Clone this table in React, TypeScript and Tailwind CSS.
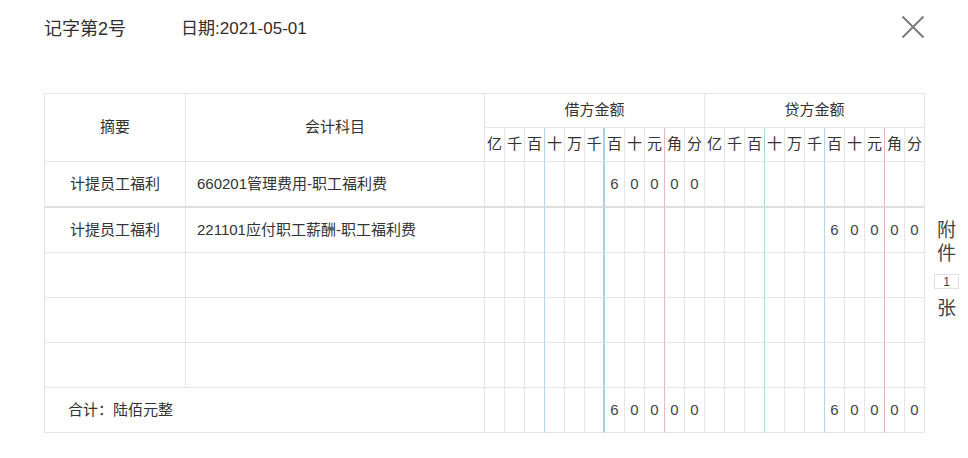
import React from "react";

const UNITS = ["亿", "千", "百", "十", "万", "千", "百", "十", "元", "角", "分"];
const EMPTY = ["", "", "", "", "", "", "", "", "", "", ""];
const SIX_HUNDRED = ["", "", "", "", "", "", "6", "0", "0", "0", "0"];

const ROWS = [
  { summary: "计提员工福利", subject: "660201管理费用-职工福利费", debit: SIX_HUNDRED, credit: EMPTY },
  { summary: "计提员工福利", subject: "221101应付职工薪酬-职工福利费", debit: EMPTY, credit: SIX_HUNDRED },
  { summary: "", subject: "", debit: EMPTY, credit: EMPTY },
  { summary: "", subject: "", debit: EMPTY, credit: EMPTY },
  { summary: "", subject: "", debit: EMPTY, credit: EMPTY },
];

const FONT = "[font-family:'Liberation_Sans','Noto_Sans_CJK_SC',sans-serif]";

// right border of each money column: blue after 百 / 千, red after 元
function lineClass(i: number, debit: boolean) {
  if (i === 2) return "border-r-[#aed8e4]";
  if (i === 5) return debit ? "border-r-2 border-r-[#a6d4e0]" : "border-r-[#aed8e4]";
  if (i === 8) return "border-r-[#e6b9bd]";
  return "border-r-[#e6e6e6]";
}

function MoneyCells({ digits, debit, rowBorder }: { digits: string[]; debit: boolean; rowBorder: string }) {
  return (
    <>
      {digits.map((d, i) => (
        <td key={i} className={`border-r border-b border-[#e6e6e6] ${rowBorder} ${lineClass(i, debit)} p-0 text-center text-[15px] text-[#444]`}>
          {d}
        </td>
      ))}
    </>
  );
}

export default function App() {
  return (
    <div className={`h-[458px] w-[968px] bg-white text-[#333] ${FONT}`}>
      <div className="flex h-[40px] items-start justify-between pl-[44px] pr-[43px] pt-[16px]">
        <div className="flex h-[24px] items-center pt-[1px] leading-[24px] text-[#2f2f2f]">
          <span className="text-[18px]">记字第2号</span>
          <span className="ml-[55px] text-[17px]">日期:2021-05-01</span>
        </div>
        <svg width="24" height="24" viewBox="0 0 24 24" className="mt-[-1px]">
          <path d="M1.5 1.5 L22.5 22.5 M22.5 1.5 L1.5 22.5" stroke="#7b7b7b" strokeWidth="2" fill="none" />
        </svg>
      </div>

      <div className="mt-[53px] flex pl-[44px]">
        <table className="table-fixed w-[881px] border-separate border-spacing-0 border-l border-t border-[#e6e6e6] text-[15px]">
          <colgroup>
            <col className="w-[141px]" />
            <col className="w-[299px]" />
            {UNITS.concat(UNITS).map((_, i) => (
              <col key={i} className="w-[20px]" />
            ))}
          </colgroup>
          <thead>
            <tr className="h-[34px]">
              <th rowSpan={2} className="border-r border-b border-[#e6e6e6] p-0 text-center font-normal">摘要</th>
              <th rowSpan={2} className="border-r border-b border-[#e6e6e6] p-0 text-center font-normal">会计科目</th>
              <th colSpan={11} className="border-r border-b border-[#e6e6e6] p-0 text-center font-normal">借方金额</th>
              <th colSpan={11} className="border-r border-b border-[#e6e6e6] p-0 text-center font-normal">贷方金额</th>
            </tr>
            <tr className="h-[34px]">
              {UNITS.map((u, i) => (
                <th key={"d" + i} className={`border-r border-b border-[#e6e6e6] ${lineClass(i, true)} p-0 text-center font-normal`}>{u}</th>
              ))}
              {UNITS.map((u, i) => (
                <th key={"c" + i} className={`border-r border-b border-[#e6e6e6] ${lineClass(i, false)} p-0 text-center font-normal`}>{u}</th>
              ))}
            </tr>
          </thead>
          <tbody>
            {ROWS.map((r, idx) => {
              const rowBorder = idx === 0 ? "border-b-2 border-b-[#dedede]" : "";
              return (
                <tr key={idx} className={idx === 0 ? "h-[46px]" : "h-[45px]"}>
                  <td className={`border-r border-b border-[#e6e6e6] ${rowBorder} p-0 text-center`}>{r.summary}</td>
                  <td className={`border-r border-b border-[#e6e6e6] ${rowBorder} p-0 pl-[11px]`}>{r.subject}</td>
                  <MoneyCells digits={r.debit} debit rowBorder={rowBorder} />
                  <MoneyCells digits={r.credit} debit={false} rowBorder={rowBorder} />
                </tr>
              );
            })}
            <tr className="h-[45px]">
              <td colSpan={2} className="border-r border-b border-[#e6e6e6] p-0 pl-[23px]">合计：陆佰元整</td>
              <MoneyCells digits={SIX_HUNDRED} debit rowBorder="" />
              <MoneyCells digits={SIX_HUNDRED} debit={false} rowBorder="" />
            </tr>
          </tbody>
        </table>

        <div className="mt-[126px] flex w-[43px] flex-col items-center text-[19px] leading-[23px] text-[#444]">
          <span>附</span>
          <span>件</span>
          <div className="mt-[9px] flex h-[15px] w-[25px] items-center justify-center border border-[#e2e2e2] text-[12px] leading-none">1</div>
          <span className="mt-[8px]">张</span>
        </div>
      </div>
    </div>
  );
}
